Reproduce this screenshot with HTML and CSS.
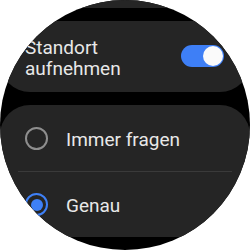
FILE: index.html
```html
<!DOCTYPE html>
<html lang="de">
<head>
  <meta charset="UTF-8" />
  <meta name="viewport" content="width=device-width, initial-scale=1.0"/>
  <title>Standort</title>
  <link rel="stylesheet" href="styles.css">
</head>
<body>

  <div class="watch">
    <div class="list">
      <div class="card card-prev"></div>

      <div class="card card-switch">
        <div class="label">Standort<br>aufnehmen</div>
        <div class="toggle on"><span class="knob"></span></div>
      </div>

      <div class="card card-options">
        <div class="option">
          <span class="radio"></span>
          <span class="option-text">Immer fragen</span>
        </div>
        <div class="divider"></div>
        <div class="option">
          <span class="radio checked"></span>
          <span class="option-text">Genau</span>
        </div>
      </div>
    </div>
  </div>

</body>
</html>
```

FILE: styles.css
```css
body {
  margin: 0;
  background-color: #ffffff;
  font-family: Roboto, "Noto Sans", sans-serif;
}
.watch {
  width: 250px;
  height: 250px;
  border-radius: 50%;
  background-color: #000;
  overflow: hidden;
}
.list {
  display: flex;
  flex-direction: column;
  gap: 13px;
}
.card {
  background-color: #252525;
  border-radius: 30px;
}
.card-prev {
  height: 60px;
  margin-top: -52px;
}
.card-switch {
  display: flex;
  align-items: center;
  padding: 16px 26px 13px 25px;
}
.label {
  flex: 1;
  font-size: 19px;
  line-height: 21px;
  color: #e8e8e8;
}
.toggle {
  width: 43px;
  height: 22px;
  border-radius: 11px;
  background-color: #3e7ff6;
  margin-top: -5px;
  display: flex;
  align-items: center;
  justify-content: flex-end;
  padding: 0 1px;
  box-sizing: border-box;
}
.knob {
  width: 20px;
  height: 20px;
  border-radius: 50%;
  background-color: #fafafa;
}
.card-options {
  display: flex;
  flex-direction: column;
}
.option {
  display: flex;
  align-items: center;
  gap: 18px;
  height: 66px;
  padding-left: 25px;
}
.option + .divider + .option {
  height: 65px;
}
.radio {
  width: 23px;
  height: 23px;
  border: 2px solid #8e8e8e;
  border-radius: 50%;
  box-sizing: border-box;
  display: flex;
  align-items: center;
  justify-content: center;
}
.radio.checked {
  border-color: #3e80f7;
}
.radio.checked::after {
  content: "";
  width: 12px;
  height: 12px;
  border-radius: 50%;
  background-color: #3e80f7;
}
.option-text {
  font-size: 19px;
  line-height: 21px;
  padding-top: 2px;
  color: #e8e8e8;
}
.divider {
  height: 1px;
  margin: 0 18px;
  background-color: #3a3a3a;
}
```
